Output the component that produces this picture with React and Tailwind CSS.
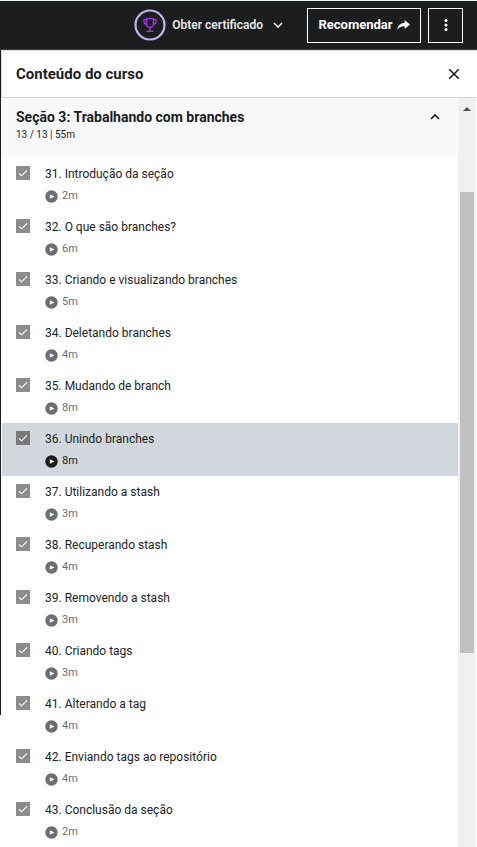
import React from "react";

const lessons = [
  { title: "31. Introdução da seção", time: "2m" },
  { title: "32. O que são branches?", time: "6m" },
  { title: "33. Criando e visualizando branches", time: "5m" },
  { title: "34. Deletando branches", time: "4m" },
  { title: "35. Mudando de branch", time: "8m" },
  { title: "36. Unindo branches", time: "8m", current: true },
  { title: "37. Utilizando a stash", time: "3m" },
  { title: "38. Recuperando stash", time: "4m" },
  { title: "39. Removendo a stash", time: "3m" },
  { title: "40. Criando tags", time: "3m" },
  { title: "41. Alterando a tag", time: "4m" },
  { title: "42. Enviando tags ao repositório", time: "4m" },
  { title: "43. Conclusão da seção", time: "2m" },
];

function TrophyRing() {
  return (
    <svg className="size-8" viewBox="0 0 32 32" fill="none" aria-hidden="true">
      <circle cx="16" cy="16" r="14.5" stroke="#c0b5ec" strokeWidth="2.2" />
      <g stroke="#a435f0" strokeWidth="1.3">
        <path d="M12.6 9.600h6.800v5.500a3.400 3.400 0 0 1-6.800 0z" />
        <path d="M12.500 10.700h-2.500v1.800c0 1.600 1 2.700 2.800 3M19.500 10.700h2.500v1.800c0 1.600-1 2.700-2.800 3" />
        <path d="M16 18.400v3.400M12.500 22.300h7" />
      </g>
    </svg>
  );
}

function Chevron({ up = false, className }) {
  return (
    <svg className={className} viewBox="0 0 10 10" fill="none" stroke="currentColor" strokeWidth="1.7" aria-hidden="true">
      <path d={up ? "M1 7l4-4 4 4" : "M1 3l4 4 4-4"} />
    </svg>
  );
}

function ShareArrow() {
  return (
    <svg className="h-3 w-[13px]" viewBox="0 0 13 12" fill="currentColor" aria-hidden="true">
      <path d="M7.6 1L13 5.5 7.6 10V7.2C4.2 7.1 2 8.2.2 11 .7 7 3.200 4 7.600 3.700z" />
    </svg>
  );
}

function PlayIcon() {
  return (
    <svg className="size-[13px]" viewBox="0 0 13 13" aria-hidden="true">
      <circle cx="6.500" cy="6.500" r="6.200" fill="currentColor" />
      <path d="M4.800 4.200v4.600L9.400 6.500z" fill="white" />
    </svg>
  );
}

function Lesson({ title, time, current, id }) {
  return (
    <li className={`flex h-[53px] gap-[15px] pt-2 pl-3.5 ${current ? "bg-[#d1d7dc]" : ""}`}>
      <span className="grid size-3.5 shrink-0">
        <input
          id={id}
          type="checkbox"
          defaultChecked
          className={`col-start-1 row-start-1 size-3.5 appearance-none ${current ? "bg-[#77797b]" : "bg-[#8c8c8c]"}`}
        />
        <svg className="pointer-events-none col-start-1 row-start-1 size-3.5" viewBox="0 0 14 14" fill="none" stroke="white" strokeWidth="1.1" aria-hidden="true">
          <path d="M3 7.300l2.600 2.500L11 4.300" />
        </svg>
      </span>
      <div className="min-w-0">
        <label htmlFor={id} className="block text-xs leading-4 whitespace-nowrap text-[#1c1d1f]">
          {title}
        </label>
        <div className={`mt-1.5 flex items-center gap-1 text-[11px] leading-4 ${current ? "text-[#1c1d1f]" : "text-[#6a6f73]"}`}>
          <PlayIcon />
          <span>{time}</span>
        </div>
      </div>
    </li>
  );
}

export default function App() {
  return (
    <div className="min-h-screen bg-white font-[Roboto,sans-serif] text-[#1c1d1f]">
      <header className="flex h-[50px] items-center justify-end border-t border-b border-t-[#e8f3f1] border-b-[#3e4143] bg-[#1c1d1f] pr-3.5 text-white">
        <button className="flex items-center gap-1.5 text-xs font-semibold text-[#e8e9ea]">
          <TrophyRing />
          <span>Obter certificado</span>
          <Chevron className="ml-1 size-2.5" />
        </button>
        <button className="ml-6 flex h-[35px] w-[114px] items-center justify-center gap-1 border border-white text-[13px] font-bold">
          Recomendar
          <ShareArrow />
        </button>
        <button className="ml-[7px] flex h-[35px] w-[35px] items-center justify-center border border-white" aria-label="Mais opções">
          <svg className="h-3 w-1" viewBox="0 0 4 12" fill="currentColor" aria-hidden="true">
            <circle cx="2" cy="1.500" r="1.500" />
            <circle cx="2" cy="6" r="1.500" />
            <circle cx="2" cy="10.500" r="1.500" />
          </svg>
        </button>
      </header>
      <div className="flex">
        <div className="h-[665px] w-px shrink-0 bg-[#1c1d1f]" />
        <section className="min-w-0 grow">
          <div className="flex h-12 items-center justify-between border-t border-b border-l border-[#d1d7dc] pr-[17px] pl-3.5">
            <h2 className="text-[15px] font-bold">Conteúdo do curso</h2>
            <button aria-label="Fechar">
              <svg className="size-3" viewBox="0 0 12 12" fill="none" stroke="currentColor" strokeWidth="1.600" aria-hidden="true">
                <path d="M1.200 1.200l9.600 9.600M10.800 1.200l-9.600 9.600" />
              </svg>
            </button>
          </div>
          <div className="flex">
            <div className="min-w-0 grow pl-px">
              <button className="flex h-[59px] w-full items-start justify-between bg-[#f7f9fa] pt-2.5 pr-[18px] pl-3.5 text-left">
                <span>
                  <span className="block text-sm leading-[18px] font-bold">Seção 3: Trabalhando com branches</span>
                  <span className="block text-[10px] leading-[18px]">13 / 13 | 55m</span>
                </span>
                <Chevron up className="mt-1 size-2.5" />
              </button>
              <ul className="pt-px">
                {lessons.map((lesson, i) => (
                  <Lesson key={lesson.title} id={`lesson-${i}`} {...lesson} />
                ))}
              </ul>
            </div>
            <div className="mr-px flex w-[18px] shrink-0 flex-col items-center bg-[#f0f0f0] pt-[9px]" aria-hidden="true">
              <svg className="h-1 w-2" viewBox="0 0 8 4" fill="#505050">
                <path d="M0 4l4-4 4 4z" />
              </svg>
              <div className="mt-[81px] h-[461px] w-3.5 bg-[#c1c1c1]" />
            </div>
          </div>
        </section>
      </div>
    </div>
  );
}
